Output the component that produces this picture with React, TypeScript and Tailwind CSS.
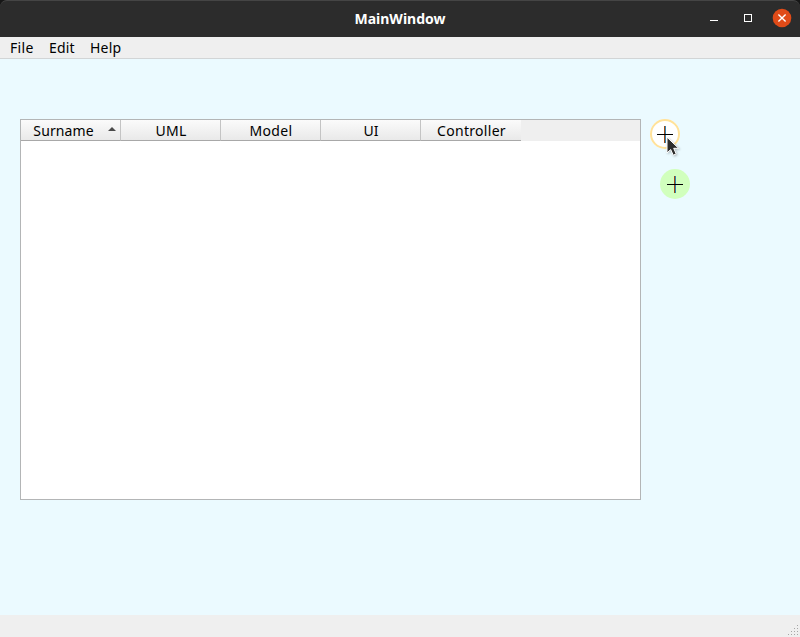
import React from "react";

const menus = [
  { label: "File", cls: "w-[39px] tracking-[0.3px]" },
  { label: "Edit", cls: "w-[41px] tracking-[0.2px]" },
  { label: "Help", cls: "w-[40px] tracking-[0.2px]" },
];

const columns = [
  { label: "Surname", sorted: true, cls: "tracking-[0.1px]" },
  { label: "UML", sorted: false, cls: "pl-[1px] tracking-[0.2px]" },
  { label: "Model", sorted: false, cls: "pl-[1px] tracking-[0.3px]" },
  { label: "UI", sorted: false, cls: "pl-[1px] tracking-[0px]" },
  { label: "Controller", sorted: false, cls: "pl-[1px] tracking-[0.3px]" },
];

const gripDots = [
  [9, 0],
  [6, 3], [9, 3],
  [3, 6], [6, 6], [9, 6],
  [0, 9], [3, 9], [6, 9], [9, 9],
];

function Plus() {
  return (
    <svg width="30" height="30" viewBox="0 0 30 30" shapeRendering="crispEdges">
      <rect x="14" y="7" width="1" height="17" fill="#a04a14" />
      <rect x="15" y="7" width="1" height="17" fill="#2f82b4" />
      <rect x="7" y="15" width="16" height="1" fill="#000" />
    </svg>
  );
}

function TitleBar() {
  return (
    <div className="bg-[#161616]">
      <header className="grid h-[37px] grid-cols-[1fr_auto_1fr] items-center rounded-t-[7px] border-t border-[#454545] bg-[#2c2c2c]">
        <span />
        <h1 className="text-[14px] leading-[20px] font-bold text-white">MainWindow</h1>
        <div className="flex items-center justify-end pr-[8px]">
          <svg width="84" height="22" viewBox="0 0 84 22">
            <rect x="2" y="12" width="8" height="1" fill="#fff" />
            <rect x="36.5" y="6.5" width="7" height="7" fill="none" stroke="#fff" />
            <circle cx="74" cy="10" r="9.3" fill="#e04b18" />
            <path d="M70.4 6.4L77.6 13.6M77.6 6.4L70.4 13.6" stroke="#fff" strokeWidth="1.4" />
          </svg>
        </div>
      </header>
    </div>
  );
}

export default function App() {
  return (
    <div className="flex h-[637px] w-[800px] cursor-default flex-col overflow-hidden bg-[#ebfaff] font-['Noto_Sans',sans-serif] text-[14px] text-black">
      <TitleBar />
      <nav className="flex h-[22px] items-center border-b border-[#d2d5d6] bg-[#efefef] pl-[10px] leading-[20px]">
        {menus.map((m) => (
          <span key={m.label} className={m.cls}>{m.label}</span>
        ))}
      </nav>

      <main className="flex flex-1 pt-[60px] pl-[20px]">
        <section className="h-[381px] w-[621px] border border-[#b3b5b6] bg-white">
          <div className="flex h-[21px] bg-[#efefef]">
            {columns.map((c) => (
              <div
                key={c.label}
                className="relative flex h-[21px] w-[100px] items-center justify-center border-r border-b border-r-[#c4c4c4] border-b-[#a8a8a8] bg-linear-to-b from-[#fbfbfb] to-[#e9e9e9] pt-[2px] leading-[20px] last:border-r-0"
              >
                <span className={c.sorted ? "mr-[14px] " + c.cls : c.cls}>{c.label}</span>
                {c.sorted && (
                  <svg className="absolute top-[7px] right-[4px]" width="8" height="5" viewBox="0 0 8 5">
                    <path d="M0 4L4 0L8 4Z" fill="#4a4a4a" />
                  </svg>
                )}
              </div>
            ))}
          </div>
        </section>

        <aside className="flex flex-col gap-[20px] pl-[9px]">
          <button className="relative h-[30px] w-[30px] rounded-full bg-white ring-2 ring-[#ffe29a] ring-inset">
            <Plus />
            <svg
              className="absolute top-[17px] left-[16px] drop-shadow-[1px_1px_1px_rgba(0,0,0,0.25)]"
              width="14"
              height="22"
              viewBox="0 0 14 22"
            >
              <path
                d="M1 1.2V17L4.7 13.5L7.2 19.2L10.2 17.9L7.7 12.3H12.6Z"
                fill="#2d2d2d"
                stroke="#fff"
                strokeWidth="1"
              />
            </svg>
          </button>
          <button className="ml-[10px] h-[30px] w-[30px] rounded-full bg-[#d1ffbd]">
            <Plus />
          </button>
        </aside>
      </main>

      <footer className="flex h-[22px] items-end justify-end bg-[#efefef] pr-[2px] pb-[2px]">
        <svg width="10" height="10" viewBox="0 0 10 10" shapeRendering="crispEdges">
          {gripDots.map(([x, y]) => (
            <rect key={x + "-" + y} x={x} y={y} width="1" height="1" fill="#a6a6a6" />
          ))}
        </svg>
      </footer>
    </div>
  );
}
